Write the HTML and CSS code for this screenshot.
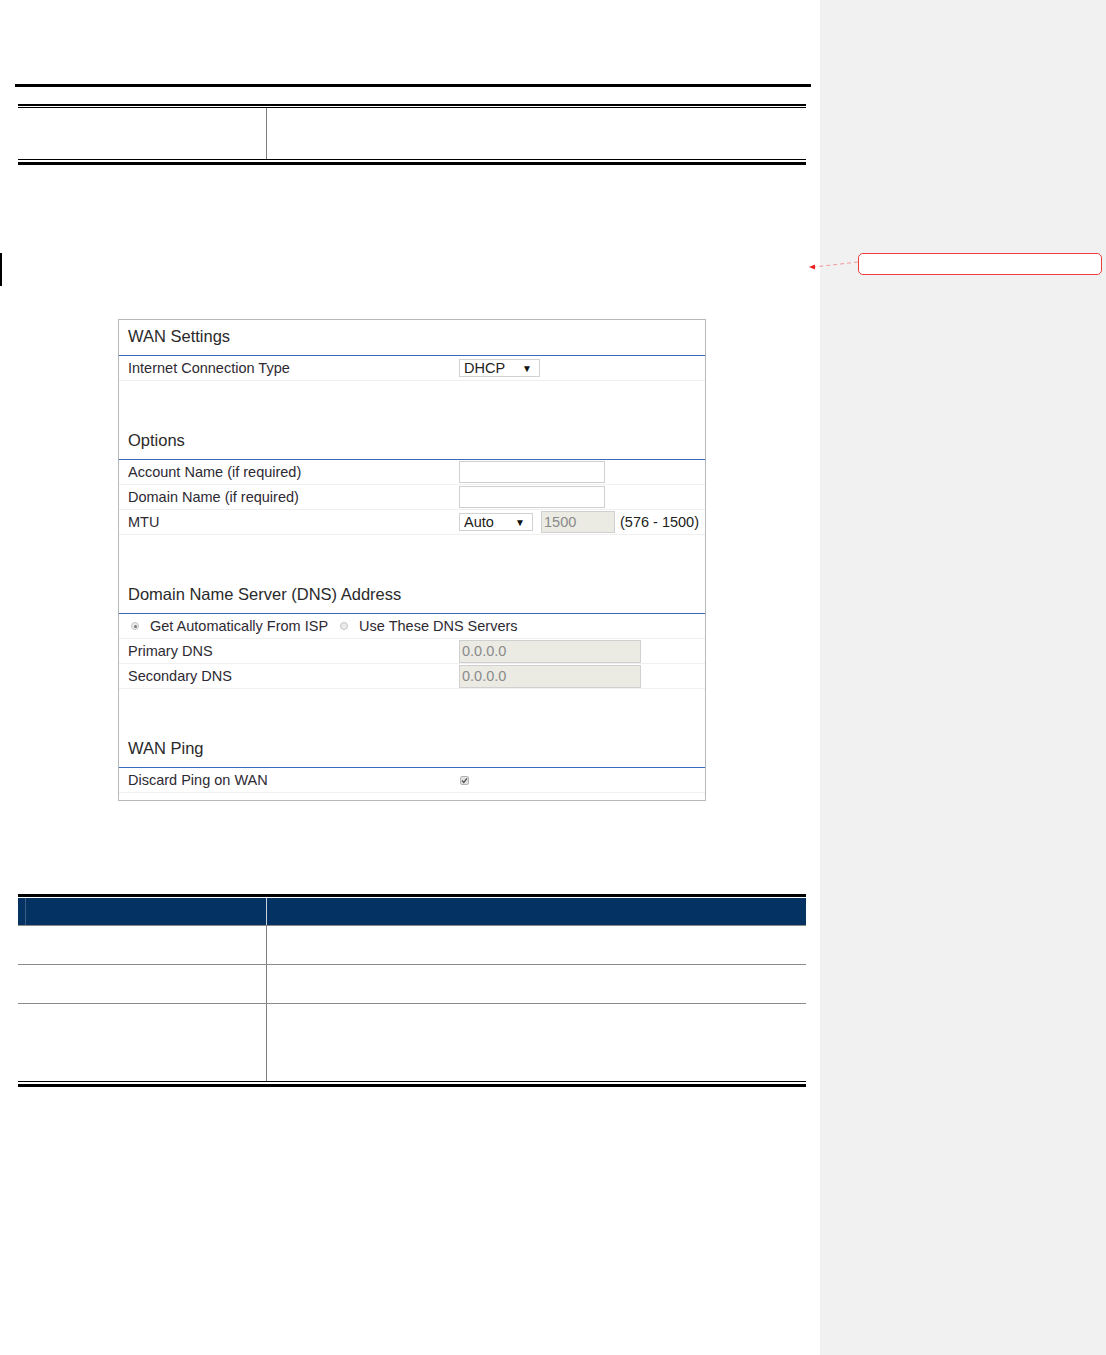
FILE: index.html
```html
<!DOCTYPE html>
<html lang="en">
<head>
  <meta charset="UTF-8" />
  <title>WAN Settings</title>
  <link rel="stylesheet" href="styles.css">
</head>
<body>
  <div class="wrap">
    <div class="page">
      <div class="top-rule"></div>

      <div class="doc-table first">
        <div class="rule-top"></div>
        <div class="doc-row tall"><div class="cell"></div><div class="cell"></div></div>
        <div class="rule-bottom"></div>
      </div>

      <div class="change-bar"></div>

      <div class="panel">
        <div class="section-title">WAN Settings</div>
        <div class="row">
          <div class="label">Internet Connection Type</div>
          <div class="ctrl">
            <div class="select dhcp"><span>DHCP</span><span class="arrow">&#9660;</span></div>
          </div>
        </div>

        <div class="section-title spaced">Options</div>
        <div class="row">
          <div class="label">Account Name (if required)</div>
          <div class="ctrl"><input class="text" type="text"></div>
        </div>
        <div class="row">
          <div class="label">Domain Name (if required)</div>
          <div class="ctrl"><input class="text" type="text"></div>
        </div>
        <div class="row">
          <div class="label">MTU</div>
          <div class="ctrl">
            <div class="select mtu"><span>Auto</span><span class="arrow">&#9660;</span></div>
            <input class="text short off" type="text" value="1500" disabled>
            <span class="hint">(576 - 1500)</span>
          </div>
        </div>

        <div class="section-title spaced">Domain Name Server (DNS) Address</div>
        <div class="row radios">
          <span class="radio on"></span><span class="opt">Get Automatically From ISP</span>
          <span class="radio"></span><span class="opt">Use These DNS Servers</span>
        </div>
        <div class="row">
          <div class="label">Primary DNS</div>
          <div class="ctrl"><input class="text wide off" type="text" value="0.0.0.0" disabled></div>
        </div>
        <div class="row">
          <div class="label">Secondary DNS</div>
          <div class="ctrl"><input class="text wide off" type="text" value="0.0.0.0" disabled></div>
        </div>

        <div class="section-title spaced">WAN Ping</div>
        <div class="row">
          <div class="label">Discard Ping on WAN</div>
          <div class="ctrl">
            <span class="check">
              <svg width="7" height="7" viewBox="0 0 7 7"><path d="M1 3.6 L2.8 5.4 L6 1.4" fill="none" stroke="#555" stroke-width="1.4"/></svg>
            </span>
          </div>
        </div>
      </div>

      <div class="doc-table second">
        <div class="rule-heavy"></div>
        <div class="doc-head"><div class="cell"><div class="mark"></div></div><div class="cell"></div></div>
        <div class="doc-row r1"><div class="cell"></div><div class="cell"></div></div>
        <div class="doc-row r2"><div class="cell"></div><div class="cell"></div></div>
        <div class="doc-row r3"><div class="cell"></div><div class="cell"></div></div>
        <div class="rule-bottom"></div>
      </div>
    </div>

    <div class="sidebar">
      <svg class="connector" width="52" height="16" viewBox="0 0 52 16">
        <path d="M52 4 L8 9" stroke="#f59a9a" stroke-width="1" stroke-dasharray="4 3" fill="none"/>
        <path d="M3 9 L9 6.5 L9 11.5 Z" fill="#e82020"/>
      </svg>
      <div class="comment"></div>
    </div>
  </div>
</body>
</html>
```

FILE: styles.css
```css
html, body {
  margin: 0;
  background-color: #fff;
}

body {
  font-family: "Liberation Sans", Arial, sans-serif;
  color: #333;
}

.wrap {
  display: flex;
  min-height: 1355px;
}

.page {
  width: 820px;
  flex: 0 0 820px;
  background: #fff;
  padding-top: 84px;
  padding-bottom: 40px;
}

.sidebar {
  flex: 1;
  position: relative;
  background-color: #f1f1f1;
  padding-top: 253px;
}

/* document tables */

.top-rule {
  height: 3px;
  margin: 0 9px 0 15px;
  background: #000;
}

.doc-table {
  margin-left: 18px;
  width: 788px;
}

.doc-table.first { margin-top: 17px; }
.doc-table.second { margin-top: 93px; }

.rule-top {
  border-top: 2px solid #000;
  border-bottom: 1px solid #000;
  height: 1px;
}

.rule-heavy {
  height: 3px;
  background: #000;
  margin-bottom: 1px;
}

.rule-bottom {
  border-top: 1px solid #000;
  border-bottom: 3px solid #000;
  height: 2px;
}

.doc-row, .doc-head {
  display: grid;
  grid-template-columns: 248px 1fr;
}

.doc-row .cell + .cell {
  border-left: 1px solid #808080;
}

.doc-row.tall { height: 51px; }

.doc-head {
  height: 27px;
  background: #033263;
  border-bottom: 1px solid #8a8a8a;
}

.doc-head .cell + .cell {
  border-left: 1px solid #c8d0dc;
}

.doc-head .mark {
  margin-left: 7px;
  height: 100%;
  border-left: 1px solid #3e5c80;
}

.doc-row.r1 { height: 38px; border-bottom: 1px solid #8a8a8a; }
.doc-row.r2 { height: 38px; border-bottom: 1px solid #8a8a8a; }
.doc-row.r3 { height: 77px; }

.change-bar {
  width: 2px;
  height: 33px;
  margin-top: 88px;
  background: #000;
}

/* wan settings panel */

.panel {
  margin: 33px 0 0 118px;
  width: 588px;
  box-sizing: border-box;
  border: 1px solid #b8b8b8;
  padding-bottom: 7px;
}

.section-title {
  font-size: 16.5px;
  line-height: 20px;
  padding: 6px 9px 9px;
  border-bottom: 1px solid #3a68bc;
  color: #2a2a2a;
}

.section-title.spaced { margin-top: 43px; }

.row {
  display: grid;
  grid-template-columns: 340px 1fr;
  align-items: center;
  height: 25px;
  box-sizing: border-box;
  border-bottom: 1px solid #efefef;
  font-size: 14.5px;
}

.label {
  padding-left: 9px;
  color: #2e2a33;
}

.ctrl {
  display: flex;
  align-items: center;
}

.select {
  display: flex;
  justify-content: space-between;
  align-items: center;
  height: 18px;
  box-sizing: border-box;
  border: 1px solid #d2d2d2;
  padding: 0 7px 0 4px;
  font-size: 14.5px;
  color: #222;
  background: #fff;
}

.select.dhcp { width: 81px; }
.select.mtu { width: 74px; }

.arrow {
  font-size: 10px;
  color: #111;
}

.text {
  height: 22px;
  width: 146px;
  box-sizing: border-box;
  border: 1px solid #d0d0d0;
  padding: 0 2px;
  font-family: inherit;
  font-size: 14.5px;
  margin: 0;
  background: #fff;
}

.text.short { width: 74px; margin-left: 8px; }
.text.wide { width: 182px; height: 23px; }

.text.off {
  background: #ebebe4;
  color: #8a8a8a;
}

.hint {
  margin-left: 5px;
  color: #222;
}

.row.radios {
  display: flex;
  padding-left: 12px;
}

.radio {
  width: 8px;
  height: 8px;
  box-sizing: border-box;
  border-radius: 50%;
  border: 1px solid #c4c4c4;
  background: #ececec;
  position: relative;
}

.radio.on::after {
  content: "";
  position: absolute;
  left: 1.5px;
  top: 1.5px;
  width: 3px;
  height: 3px;
  border-radius: 50%;
  background: #777;
}

.opt {
  margin-left: 11px;
  margin-right: 12px;
  color: #2e2a33;
}

.check {
  display: flex;
  align-items: center;
  justify-content: center;
  width: 9px;
  height: 9px;
  box-sizing: border-box;
  margin-left: 1px;
  border: 1px solid #b4b4b4;
  border-radius: 2px;
  background: #e2e2e2;
}

/* review comment */

.comment {
  margin-left: 38px;
  width: 244px;
  height: 22px;
  box-sizing: border-box;
  border: 1px solid #f03c3c;
  border-radius: 5px;
  background: #fff;
}

.connector {
  position: absolute;
  left: -14px;
  top: 258px;
}
```
